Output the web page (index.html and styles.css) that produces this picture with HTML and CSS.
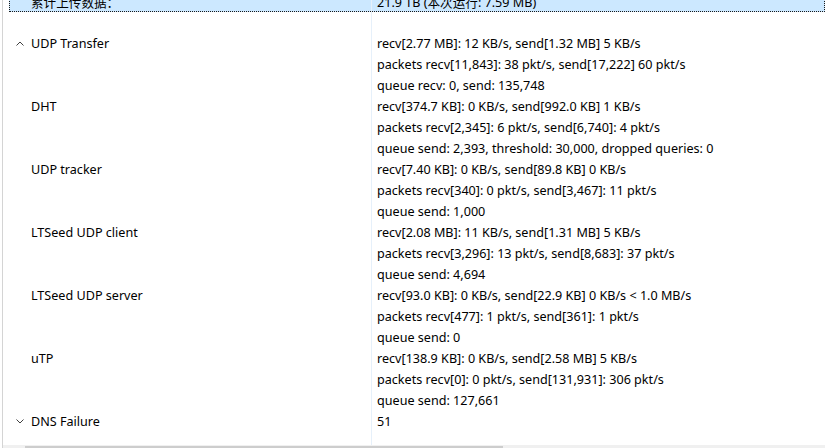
FILE: index.html
```html
<!DOCTYPE html>
<html lang="zh-CN">

<head>
    <meta charset="UTF-8">
    <title>统计</title>
    <link rel="stylesheet" href="styles.css">
</head>

<body>

    <div class="panel">
        <div class="tree">
            <!-- selected row, scrolled mostly out of view -->
            <div class="row selected">
                <div class="name">累计上传数据：</div>
                <div class="value">21.9 TB (本次运行: 7.59 MB)</div>
            </div>
            <div class="row">
                <div class="name"></div>
                <div class="value"></div>
            </div>

            <div class="row">
                <div class="name">
                    <svg class="chevron" width="8" height="5" viewBox="0 0 8 5"><polyline points="0.5,4.5 4,1 7.5,4.5" /></svg>
                    UDP Transfer
                </div>
                <div class="value">recv[2.77 MB]: 12 KB/s, send[1.32 MB] 5 KB/s</div>
            </div>
            <div class="row">
                <div class="name"></div>
                <div class="value">packets recv[11,843]: 38 pkt/s, send[17,222] 60 pkt/s</div>
            </div>
            <div class="row">
                <div class="name"></div>
                <div class="value">queue recv: 0, send: 135,748</div>
            </div>

            <div class="row">
                <div class="name">DHT</div>
                <div class="value">recv[374.7 KB]: 0 KB/s, send[992.0 KB] 1 KB/s</div>
            </div>
            <div class="row">
                <div class="name"></div>
                <div class="value">packets recv[2,345]: 6 pkt/s, send[6,740]: 4 pkt/s</div>
            </div>
            <div class="row">
                <div class="name"></div>
                <div class="value">queue send: 2,393, threshold: 30,000, dropped queries: 0</div>
            </div>

            <div class="row">
                <div class="name">UDP tracker</div>
                <div class="value">recv[7.40 KB]: 0 KB/s, send[89.8 KB] 0 KB/s</div>
            </div>
            <div class="row">
                <div class="name"></div>
                <div class="value">packets recv[340]: 0 pkt/s, send[3,467]: 11 pkt/s</div>
            </div>
            <div class="row">
                <div class="name"></div>
                <div class="value">queue send: 1,000</div>
            </div>

            <div class="row">
                <div class="name">LTSeed UDP client</div>
                <div class="value">recv[2.08 MB]: 11 KB/s, send[1.31 MB] 5 KB/s</div>
            </div>
            <div class="row">
                <div class="name"></div>
                <div class="value">packets recv[3,296]: 13 pkt/s, send[8,683]: 37 pkt/s</div>
            </div>
            <div class="row">
                <div class="name"></div>
                <div class="value">queue send: 4,694</div>
            </div>

            <div class="row">
                <div class="name">LTSeed UDP server</div>
                <div class="value">recv[93.0 KB]: 0 KB/s, send[22.9 KB] 0 KB/s &lt; 1.0 MB/s</div>
            </div>
            <div class="row">
                <div class="name"></div>
                <div class="value">packets recv[477]: 1 pkt/s, send[361]: 1 pkt/s</div>
            </div>
            <div class="row">
                <div class="name"></div>
                <div class="value">queue send: 0</div>
            </div>

            <div class="row">
                <div class="name">uTP</div>
                <div class="value">recv[138.9 KB]: 0 KB/s, send[2.58 MB] 5 KB/s</div>
            </div>
            <div class="row">
                <div class="name"></div>
                <div class="value">packets recv[0]: 0 pkt/s, send[131,931]: 306 pkt/s</div>
            </div>
            <div class="row">
                <div class="name"></div>
                <div class="value">queue send: 127,661</div>
            </div>

            <div class="row">
                <div class="name">
                    <svg class="chevron" width="8" height="5" viewBox="0 0 8 5"><polyline points="0.5,0.5 4,4 7.5,0.5" /></svg>
                    DNS Failure
                </div>
                <div class="value">51</div>
            </div>

            <!-- empty space below the last row keeps the column line -->
            <div class="row filler">
                <div class="name"></div>
                <div class="value"></div>
            </div>
        </div>

        <div class="hscroll">
            <div class="thumb"></div>
        </div>
    </div>

</body>

</html>
```

FILE: styles.css
```css
html,
body {
    height: 100%;
}

body {
    margin: 0;
    font-family: "Noto Sans", "Noto Sans CJK SC", sans-serif;
    font-size: 12.6px;
    color: #000;
    background-color: #fff;
    overflow: hidden;
}

.panel {
    height: 100%;
    margin-left: 2px;
    border-left: 1px solid #d4d4d4;
    display: flex;
    flex-direction: column;
    overflow: hidden;
}

.tree {
    flex: 1;
    display: flex;
    flex-direction: column;
    margin-top: -9px;
    padding-left: 6px;
}

.row {
    display: flex;
    height: 21px;
    flex-shrink: 0;
}

.row.filler {
    flex: 1;
}

.name {
    width: 340px;
    padding-left: 22px;
    display: flex;
    align-items: center;
    white-space: nowrap;
    position: relative;
}

.value {
    flex: 1;
    border-left: 1px solid #e6f0fa;
    padding-left: 5px;
    display: flex;
    align-items: center;
    white-space: nowrap;
}

.selected {
    background-color: #cce8ff;
    outline: 1px dotted #1a1a1a;
    outline-offset: -1px;
}

.chevron {
    position: absolute;
    left: 7px;
    top: 8px;
    fill: none;
    stroke: #404040;
    stroke-width: 1;
}

.hscroll {
    height: 3px;
    flex-shrink: 0;
    background-color: #f0f0f0;
    padding-left: 22px;
    display: flex;
    align-items: flex-end;
}

.thumb {
    width: 478px;
    height: 2px;
    background-color: #cdcdcd;
}
```
